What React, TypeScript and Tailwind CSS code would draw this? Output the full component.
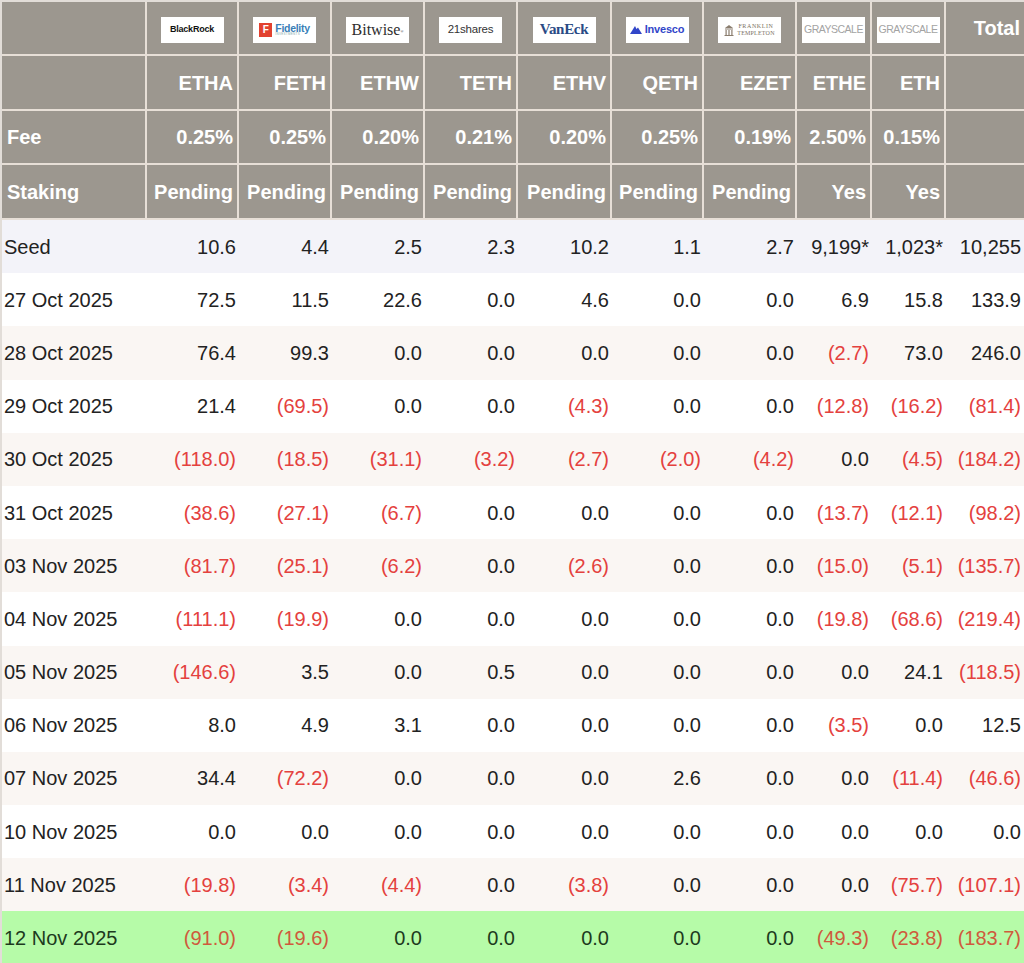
import type { ReactNode } from "react"

const FONT = { fontFamily: '"Liberation Sans", Arial, sans-serif' }

const tickers = ["ETHA", "FETH", "ETHW", "TETH", "ETHV", "QETH", "EZET", "ETHE", "ETH", ""]
const fees = ["0.25%", "0.25%", "0.20%", "0.21%", "0.20%", "0.25%", "0.19%", "2.50%", "0.15%", ""]
const staking = ["Pending", "Pending", "Pending", "Pending", "Pending", "Pending", "Pending", "Yes", "Yes", ""]

const widths = [145, 92, 93, 93, 93, 94, 92, 93, 75, 74, 78]

const rows: [string, string[]][] = [
  ["Seed", ["10.6", "4.4", "2.5", "2.3", "10.2", "1.1", "2.7", "9,199*", "1,023*", "10,255"]],
  ["27 Oct 2025", ["72.5", "11.5", "22.6", "0.0", "4.6", "0.0", "0.0", "6.9", "15.8", "133.9"]],
  ["28 Oct 2025", ["76.4", "99.3", "0.0", "0.0", "0.0", "0.0", "0.0", "(2.7)", "73.0", "246.0"]],
  ["29 Oct 2025", ["21.4", "(69.5)", "0.0", "0.0", "(4.3)", "0.0", "0.0", "(12.8)", "(16.2)", "(81.4)"]],
  ["30 Oct 2025", ["(118.0)", "(18.5)", "(31.1)", "(3.2)", "(2.7)", "(2.0)", "(4.2)", "0.0", "(4.5)", "(184.2)"]],
  ["31 Oct 2025", ["(38.6)", "(27.1)", "(6.7)", "0.0", "0.0", "0.0", "0.0", "(13.7)", "(12.1)", "(98.2)"]],
  ["03 Nov 2025", ["(81.7)", "(25.1)", "(6.2)", "0.0", "(2.6)", "0.0", "0.0", "(15.0)", "(5.1)", "(135.7)"]],
  ["04 Nov 2025", ["(111.1)", "(19.9)", "0.0", "0.0", "0.0", "0.0", "0.0", "(19.8)", "(68.6)", "(219.4)"]],
  ["05 Nov 2025", ["(146.6)", "3.5", "0.0", "0.5", "0.0", "0.0", "0.0", "0.0", "24.1", "(118.5)"]],
  ["06 Nov 2025", ["8.0", "4.9", "3.1", "0.0", "0.0", "0.0", "0.0", "(3.5)", "0.0", "12.5"]],
  ["07 Nov 2025", ["34.4", "(72.2)", "0.0", "0.0", "0.0", "2.6", "0.0", "0.0", "(11.4)", "(46.6)"]],
  ["10 Nov 2025", ["0.0", "0.0", "0.0", "0.0", "0.0", "0.0", "0.0", "0.0", "0.0", "0.0"]],
  ["11 Nov 2025", ["(19.8)", "(3.4)", "(4.4)", "0.0", "(3.8)", "0.0", "0.0", "0.0", "(75.7)", "(107.1)"]],
  ["12 Nov 2025", ["(91.0)", "(19.6)", "0.0", "0.0", "0.0", "0.0", "0.0", "(49.3)", "(23.8)", "(183.7)"]],
]

function LogoBox({ children }: { children: ReactNode }) {
  return (
    <div className="mx-auto mt-[3px] flex h-[26px] w-[63px] items-center justify-center overflow-hidden bg-white font-normal">
      {children}
    </div>
  )
}

const logos: ReactNode[] = [
  <LogoBox key="br">
    <span className="text-[9px] font-bold tracking-[-0.2px] text-[#111]">BlackRock</span>
  </LogoBox>,
  <LogoBox key="fi">
    <div className="flex items-center gap-[3px]">
      <div className="flex h-[14px] w-[13px] items-center justify-center bg-[#e2412f]">
        <span className="text-[10px] font-bold leading-none text-white">F</span>
      </div>
      <div className="flex flex-col items-start leading-none">
        <span className="text-[10.5px] font-bold tracking-[-0.3px] text-[#3a7fb8]">Fidelity</span>
        <span className="text-[3px] tracking-[0.3px] text-[#8aa]">INVESTMENTS</span>
      </div>
    </div>
  </LogoBox>,
  <LogoBox key="bw">
    <span className="text-[16px] leading-none text-[#2e2e2e]" style={{ fontFamily: '"Liberation Serif", serif' }}>
      Bitwise<sup className="text-[4px]">®</sup>
    </span>
  </LogoBox>,
  <LogoBox key="21">
    <span className="text-[11.5px] tracking-[-0.2px] text-[#333]">21shares</span>
  </LogoBox>,
  <LogoBox key="ve">
    <span className="text-[15px] font-bold leading-none tracking-[-0.3px] text-[#2a4a85]" style={{ fontFamily: '"Liberation Serif", serif' }}>
      VanEck
    </span>
  </LogoBox>,
  <LogoBox key="iv">
    <div className="flex items-center gap-[3px]">
      <svg width="12" height="9" viewBox="0 0 12 9">
        <path d="M0 9 L5 1 L6.5 4 L8 2.5 L12 9 Z" fill="#3146c9" />
      </svg>
      <span className="text-[11px] font-bold tracking-[-0.2px] text-[#3146c9]">Invesco</span>
    </div>
  </LogoBox>,
  <LogoBox key="ft">
    <div className="flex items-center gap-[3px]">
      <svg width="10" height="12" viewBox="0 0 10 12">
        <path d="M1 4 L5 1 L9 4 Z" fill="#8a7d6e" />
        <rect x="1" y="4.5" width="8" height="1" fill="#8a7d6e" />
        <rect x="1.5" y="6" width="1.2" height="5" fill="#8a7d6e" />
        <rect x="4.4" y="6" width="1.2" height="5" fill="#8a7d6e" />
        <rect x="7.3" y="6" width="1.2" height="5" fill="#8a7d6e" />
        <rect x="0.5" y="11" width="9" height="1" fill="#8a7d6e" />
      </svg>
      <div className="flex flex-col leading-[7px] text-[#7d7164]" style={{ fontFamily: '"Liberation Serif", serif' }}>
        <span className="text-[6px] tracking-[0.6px]">FRANKLIN</span>
        <span className="text-[6px] tracking-[0.2px]">TEMPLETON</span>
      </div>
    </div>
  </LogoBox>,
  <LogoBox key="g1">
    <span className="text-[10.5px] tracking-[-0.5px] text-[#a3a3a3]">GRAYSCALE</span>
  </LogoBox>,
  <LogoBox key="g2">
    <span className="text-[10.5px] tracking-[-0.5px] text-[#a3a3a3]">GRAYSCALE</span>
  </LogoBox>,
]

function rowBg(i: number, last: boolean) {
  if (last) return "bg-[#b6fba8]"
  if (i === 0) return "bg-[#f3f3f9]"
  return i % 2 === 0 ? "bg-[#faf6f3]" : "bg-white"
}

const cellBase = "border-b-2 border-[#e7dfd7] bg-[#9c978f] align-middle text-[20px] font-bold text-white"
const th = cellBase + " border-r-2 px-1 text-right"
const thLast = cellBase + " px-1 text-right"
const thLabel = cellBase + " border-r-2 pl-[5px] text-left"
const thLogo = cellBase + " border-r-2 px-0"

export default function App() {
  return (
    <div className="min-h-screen bg-white" style={FONT}>
      <table className="w-[1024px] table-fixed border-separate border-spacing-0 border-l-2 border-r-2 border-t-2 border-[#e2ddd8]">
        <colgroup>
          {widths.map((w, i) => (
            <col key={i} style={{ width: w }} />
          ))}
        </colgroup>
        <thead>
          <tr className="h-[54px]">
            <th className={th}></th>
            {logos.map((l, i) => (
              <th key={i} className={thLogo}>
                {l}
              </th>
            ))}
            <th className={thLast}>Total</th>
          </tr>
          <tr className="h-[55px]">
            <th className={th}></th>
            {tickers.map((t, i) => (
              <th key={i} className={i === 9 ? thLast : th}>
                {t}
              </th>
            ))}
          </tr>
          <tr className="h-[54px]">
            <th className={thLabel}>Fee</th>
            {fees.map((t, i) => (
              <th key={i} className={i === 9 ? thLast : th}>
                {t}
              </th>
            ))}
          </tr>
          <tr className="h-[55px]">
            <th className={thLabel}>Staking</th>
            {staking.map((t, i) => (
              <th key={i} className={i === 9 ? thLast : th}>
                {t}
              </th>
            ))}
          </tr>
        </thead>
        <tbody>
          {rows.map(([label, vals], i) => {
            const last = i === rows.length - 1
            return (
              <tr key={label} className={"h-[53.2px] " + rowBg(i, last)}>
                <td className={"pl-[2px] text-left text-[20px] " + (last ? "text-[#1d3a1d]" : "text-[#222]")}>{label}</td>
                {vals.map((v, j) => {
                  const neg = v.startsWith("(")
                  const color = neg ? (last ? "text-[#cf5a3c]" : "text-[#e4413e]") : last ? "text-[#1d3a1d]" : "text-[#222]"
                  return (
                    <td key={j} className={"pr-[3px] text-right text-[20px] " + color}>
                      {v}
                    </td>
                  )
                })}
              </tr>
            )
          })}
        </tbody>
      </table>
    </div>
  )
}
